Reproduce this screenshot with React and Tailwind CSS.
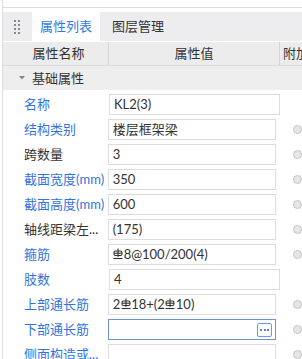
import React from "react";

const Rebar = () => (
  <svg width="10" height="12" viewBox="0 0 10 12" className="inline-block align-[-1px] mx-[0.5px]" fill="none" stroke="#333" strokeWidth="1.1">
    <line x1="5" y1="0.5" x2="5" y2="9" />
    <rect x="1" y="3" width="8" height="4.5" rx="1.5" />
    <line x1="1" y1="5.2" x2="9" y2="5.2" />
    <line x1="0.5" y1="10.5" x2="9.5" y2="10.5" />
  </svg>
);

const rows = [
  { label: "名称", blue: true, value: "KL2(3)", radio: false },
  { label: "结构类别", blue: true, value: "楼层框架梁", radio: true },
  { label: "跨数量", blue: false, value: "3", radio: true },
  { label: "截面宽度(mm)", blue: true, value: "350", radio: true },
  { label: "截面高度(mm)", blue: true, value: "600", radio: true },
  { label: "轴线距梁左...", blue: false, value: "(175)", radio: true },
  { label: "箍筋", blue: true, value: <><Rebar />8@100/200(4)</>, radio: true },
  { label: "肢数", blue: true, value: "4", radio: false },
  { label: "上部通长筋", blue: true, value: <>2<Rebar />18+(2<Rebar />10)</>, radio: true },
  { label: "下部通长筋", blue: true, value: "", radio: true, active: true },
  { label: "侧面构造或...", blue: true, value: "", radio: true },
];

export default function App() {
  return (
    <div
      className="w-[302px] h-[359px] overflow-hidden bg-white relative text-[13px] text-[#333]"
      style={{ fontFamily: '"Lato", "Noto Sans CJK SC", sans-serif' }}
    >
      <div className="absolute left-[2px] top-0 bottom-0 w-px bg-[#dcdcdc]" />
      <div className="h-[8px] border-b border-[#dcdcdc] ml-[2px]" />
      <div className="h-[4px]" />
      {/* tab bar */}
      <div className="h-[29px] bg-[#ededf0] flex items-stretch ml-[3px]">
        <div className="w-[29px] flex items-center justify-center">
          <div className="grid grid-cols-2 gap-x-[2px] gap-y-[2px] -ml-[2px]">
            {Array.from({ length: 8 }).map((_, i) => (
              <div key={i} className="w-[2px] h-[2px] bg-[#8a8a8a]" />
            ))}
          </div>
        </div>
        <div className="w-[68px] bg-white flex items-center justify-center text-[#2f7ae5] leading-none">属性列表</div>
        <div className="pl-[12px] flex items-center leading-none">图层管理</div>
      </div>
      {/* header */}
      <div className="h-[25px] bg-[#ececec] flex border-t border-white border-b border-b-[#dcdcdc] ml-[3px]">
        <div className="w-[106px] pl-[6px] flex items-center justify-center border-r border-[#d4d4d4] leading-none">属性名称</div>
        <div className="w-[171px] flex items-center justify-center border-r border-[#d4d4d4] leading-none">属性值</div>
        <div className="flex-1 pl-[3px] flex items-center leading-none whitespace-nowrap overflow-hidden">附加</div>
      </div>
      {/* group */}
      <div className="h-[24px] bg-[#eeeeee] flex items-center ml-[3px]">
        <svg width="6" height="4" viewBox="0 0 6 4" className="ml-[16px] mr-[7px]">
          <polygon points="0,0 6,0 3,3.5" fill="#888" />
        </svg>
        <span className="leading-none">基础属性</span>
      </div>
      {/* rows */}
      <div className="ml-[3px]">
        {rows.map((r, i) => (
          <div key={i} className="h-[25px] flex items-start pt-[4px]">
            <div className={`w-[106px] pl-[21px] h-[20px] flex items-center whitespace-nowrap leading-none ${r.blue ? "text-[#3373e0]" : "text-[#333]"}`}>
              {r.label}
            </div>
            <div
              className={`w-[171px] h-[21px] flex items-center pl-[4px] pr-[3px] leading-none whitespace-nowrap ${r.active ? "border border-[#6b93d6]" : "border border-[#dcdcdc]"}`}
            >
              <span className="flex-1">{r.value}</span>
              {r.active && (
                <div className="w-[15px] h-[14px] border border-[#6b9be0] rounded-[2px] flex items-center justify-center gap-[1.5px]">
                  <div className="w-[2px] h-[2px] bg-[#4a86e0]" />
                  <div className="w-[2px] h-[2px] bg-[#4a86e0]" />
                  <div className="w-[2px] h-[2px] bg-[#4a86e0]" />
                </div>
              )}
            </div>
            <div className="flex-1 h-[21px] flex items-center pl-[17px]">
              {r.radio && (
                <div className="w-[9px] h-[9px] shrink-0 rounded-full bg-[#e6e6e6] border border-[#c4c4c4]" />
              )}
            </div>
          </div>
        ))}
      </div>
    </div>
  );
}
